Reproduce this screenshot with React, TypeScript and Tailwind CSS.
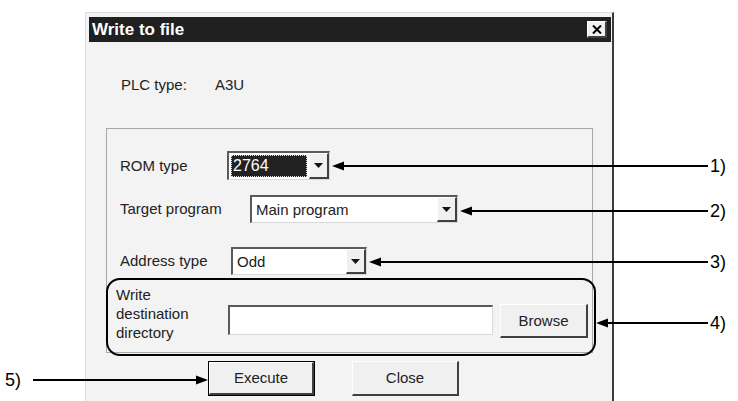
import React from 'react';

const FONT = { fontFamily: '"Liberation Sans", Arial, sans-serif' };

function DropButton() {
  return (
    <div className="w-[20px] h-full flex items-center justify-center bg-[#f0f0f0] border-t border-l border-[#ffffff] border-b-2 border-r-2 border-b-[#404040] border-r-[#404040]">
      <svg width="9" height="5" viewBox="0 0 9 5">
        <polygon points="0,0 9,0 4.5,5" fill="#111" />
      </svg>
    </div>
  );
}

function Combo({ width, value, selected }: { width: string; value: string; selected?: boolean }) {
  return (
    <div className={`${width} h-full flex bg-white border-t-2 border-l-2 border-[#5a5a5a] border-b border-r border-b-[#d8d8d8] border-r-[#d8d8d8]`}>
      <div className="flex-1 flex items-center p-[2px]">
        {selected ? (
          <div className="h-full flex-1 flex items-center bg-[#222] text-white border border-dotted border-[#ddd] pl-[1px] text-[16px]">
            {value}
          </div>
        ) : (
          <span className="pl-[2px]">{value}</span>
        )}
      </div>
      <DropButton />
    </div>
  );
}

function Button({ label, isDefault }: { label: string; isDefault?: boolean }) {
  return (
    <div className={`h-[35px] w-[107px] ${isDefault ? 'border border-black' : ''}`}>
      <div className="h-full w-full flex items-center justify-center bg-[#f0f0f0] border-t border-l border-white border-b-2 border-r-2 border-b-[#404040] border-r-[#404040]">
        {label}
      </div>
    </div>
  );
}

export default function App() {
  return (
    <div className="relative w-[738px] h-[401px] bg-white overflow-hidden text-[15px] leading-[18px] text-[#222]" style={FONT}>
      {/* dialog */}
      <div className="ml-[85px] mt-[12px] w-[529px] h-[400px] bg-[#f3f3f3] border-l border-t border-[#dcdcdc] border-r-2 border-r-[#3c3c3c] pt-[4px] pl-[3px] pr-[1px]">
        <div className="h-[25px] bg-[#202020] flex items-center justify-between pl-[3px] pr-[4px]">
          <span className="text-white font-bold text-[17px]">Write to file</span>
          <div className="w-[20px] h-[17px] flex items-center justify-center bg-[#f0f0f0] border-t border-l border-white border-b-2 border-r-2 border-b-[#404040] border-r-[#404040]">
            <svg width="10" height="9" viewBox="0 0 10 9">
              <path d="M1 0.5 L9 8.5 M9 0.5 L1 8.5" stroke="#000" strokeWidth="2" />
            </svg>
          </div>
        </div>

        <div className="mt-[34px] pl-[32px] flex">
          <span className="w-[94px]">PLC type:</span>
          <span>A3U</span>
        </div>

        {/* group box */}
        <div className="mt-[34px] ml-[17px] w-[487px] border border-[#a8a8a8] pt-[22px] pl-[13px] pb-[10px]">
          <div className="flex items-center h-[29px]">
            <span className="w-[107px]">ROM type</span>
            <Combo width="w-[103px]" value="2764" selected />
          </div>
          <div className="flex items-center h-[28px] mt-[15px]">
            <span className="w-[130px]">Target program</span>
            <Combo width="w-[208px]" value="Main program" />
          </div>
          <div className="flex items-center h-[28px] mt-[24px]">
            <span className="w-[111px]">Address type</span>
            <Combo width="w-[136px]" value="Odd" />
          </div>
          <div className="flex items-start mt-[10px] -ml-[4px]">
            <div className="w-[112px] leading-[19px]">
              <div>Write</div>
              <div>destination</div>
              <div>directory</div>
            </div>
            <div className="mt-[20px] w-[265px] h-[30px] bg-white border-t-2 border-l-2 border-[#5a5a5a] border-b border-r border-b-[#d8d8d8] border-r-[#d8d8d8]" />
            <div className="mt-[19px] ml-[7px] w-[88px] h-[34px] flex items-center justify-center bg-[#f0f0f0] border-t border-l border-white border-b-2 border-r-2 border-b-[#404040] border-r-[#404040]">
              Browse
            </div>
          </div>
        </div>

        <div className="mt-[8px] pl-[119px] flex gap-[37px]">
          <Button label="Execute" isDefault />
          <Button label="Close" />
        </div>
      </div>

      {/* annotation: rounded frame around destination row */}
      <div className="absolute left-[106px] top-[278px] w-[490px] h-[78px] border-2 border-black rounded-[14px]" />

      {/* annotation arrows */}
      <svg className="absolute left-0 top-0" width="738" height="401" viewBox="0 0 738 401">
        <g stroke="#000" strokeWidth="2">
          <line x1="340" y1="166" x2="708" y2="166" />
          <line x1="468" y1="211" x2="708" y2="211" />
          <line x1="378" y1="262" x2="708" y2="262" />
          <line x1="604" y1="323" x2="708" y2="323" />
          <line x1="33" y1="380" x2="200" y2="380" />
        </g>
        <g fill="#000">
          <polygon points="332,166 344,161.5 344,170.5" />
          <polygon points="460,211 472,206.5 472,215.5" />
          <polygon points="369,262 381,257.5 381,266.5" />
          <polygon points="596,323 608,318.5 608,327.5" />
          <polygon points="208,380 196,375.5 196,384.5" />
        </g>
      </svg>
      <span className="absolute left-[710px] top-[155px] text-[18px] leading-[22px] text-black">1)</span>
      <span className="absolute left-[710px] top-[200px] text-[18px] leading-[22px] text-black">2)</span>
      <span className="absolute left-[710px] top-[251px] text-[18px] leading-[22px] text-black">3)</span>
      <span className="absolute left-[710px] top-[312px] text-[18px] leading-[22px] text-black">4)</span>
      <span className="absolute left-[5px] top-[369px] text-[18px] leading-[22px] text-black">5)</span>
    </div>
  );
}
